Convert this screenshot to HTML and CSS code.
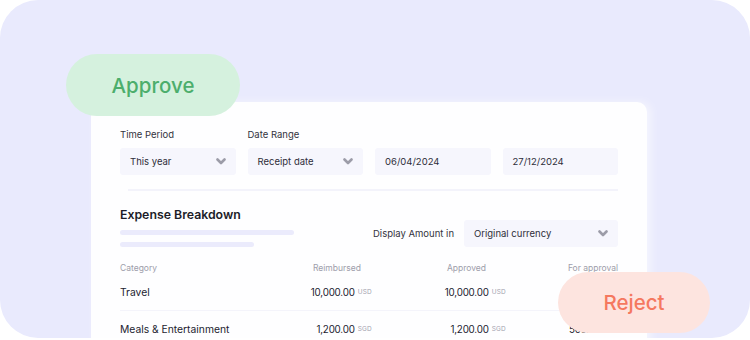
FILE: index.html
```html
<!DOCTYPE html>
<html lang="en">
<head>
<meta charset="utf-8">
<title>Expense approval</title>
<link rel="stylesheet" href="styles.css">
</head>
<body>
<div class="frame">
  <div class="card">
    <div class="filters">
      <div class="label">Time Period</div>
      <div class="label">Date Range</div>
      <div class="label"></div>
      <div class="label"></div>
      <div class="field">This year<svg class="chev" viewBox="0 0 10 7"><path d="M1.5 1.5 L5 5 L8.5 1.5"/></svg></div>
      <div class="field">Receipt date<svg class="chev" viewBox="0 0 10 7"><path d="M1.5 1.5 L5 5 L8.5 1.5"/></svg></div>
      <div class="field">06/04/2024</div>
      <div class="field">27/12/2024</div>
    </div>
    <div class="divider"></div>
    <div class="section-head">
      <div class="section-left">
        <div class="title">Expense Breakdown</div>
        <div class="bar bar-long"></div>
        <div class="bar bar-short"></div>
      </div>
      <div class="section-right">
        <span class="display-label">Display Amount in</span>
        <div class="field field-wide">Original currency<svg class="chev" viewBox="0 0 10 7"><path d="M1.5 1.5 L5 5 L8.5 1.5"/></svg></div>
      </div>
    </div>
    <div class="table">
      <div class="th">Category</div>
      <div class="th th-mid">Reimbursed</div>
      <div class="th th-mid">Approved</div>
      <div class="th th-end">For approval</div>

      <div class="td cat">Travel</div>
      <div class="td amt">10,000.00 <span class="cur">USD</span></div>
      <div class="td amt">10,000.00 <span class="cur">USD</span></div>
      <div class="td amt"></div>

      <div class="td cat">Meals &amp; Entertainment</div>
      <div class="td amt">1,200.00 <span class="cur">SGD</span></div>
      <div class="td amt">1,200.00 <span class="cur">SGD</span></div>
      <div class="td amt">500.00 <span class="cur">USD</span></div>
    </div>
  </div>
  <div class="pill pill-approve">Approve</div>
  <div class="pill pill-reject">Reject</div>
</div>
</body>
</html>
```
FILE: styles.css
```css
* { box-sizing: border-box; }
html, body { margin: 0; padding: 0; background: #ffffff; }
body { font-family: "Inter", "Noto Sans", sans-serif; color: #2a2a36; }

.frame {
  position: relative;
  width: 750px;
  height: 338px;
  background: #e9eafd;
  border-radius: 38px;
  overflow: hidden;
  padding-top: 102px;
  padding-left: 91px;
}

.card {
  width: 556px;
  height: 260px;
  background: #fefeff;
  border-radius: 8px 10px 0 0;
  padding: 27px 29px 0 29px;
  box-shadow: 4px 0 10px rgba(255, 255, 255, 0.55);
  overflow: hidden;
}

.filters {
  display: grid;
  grid-template-columns: repeat(4, 1fr);
  column-gap: 12px;
  row-gap: 7px;
}
.label {
  font-size: 9.5px;
  line-height: 12px;
  color: #333340;
}
.field {
  height: 27px;
  background: #f6f6fd;
  border-radius: 3px;
  display: flex;
  align-items: center;
  justify-content: space-between;
  padding: 0 10px 0 10px;
  font-size: 9.5px;
  color: #2e2e3a;
}
.chev {
  width: 10px;
  height: 7px;
  fill: none;
  stroke: #9c9ca8;
  stroke-width: 2.6;
  stroke-linecap: round;
  stroke-linejoin: round;
}

.divider {
  height: 2px;
  background: #f3f3fb;
  margin: 14px 0 0 8px;
}

.section-head {
  display: flex;
  justify-content: space-between;
  align-items: flex-end;
  margin-top: 16px;
}
.section-left { display: flex; flex-direction: column; }
.title {
  font-size: 12.3px;
  line-height: 16px;
  font-weight: 600;
  color: #1c1c28;
}
.bar {
  height: 5px;
  border-radius: 3px;
  background: #ebebfc;
}
.bar-long { width: 174px; margin-top: 7px; }
.bar-short { width: 134px; margin-top: 7px; }

.section-right {
  display: flex;
  align-items: center;
  gap: 10px;
}
.display-label { font-size: 9.5px; color: #333340; }
.field-wide { width: 154px; }

.table {
  display: grid;
  grid-template-columns: 118px 134px 134px 1fr;
  margin-top: 15px;
}
.th {
  font-size: 8.5px;
  line-height: 12px;
  color: #9d9daa;
}
.th-mid { padding-left: 75px; white-space: nowrap; }
.th-end { text-align: right; white-space: nowrap; }
.td {
  height: 37px;
  display: flex;
  align-items: center;
  border-bottom: 1px solid #f4f4fb;
  font-size: 10.3px;
  color: #23232f;
}
.td.cat { white-space: nowrap; }
.td.amt {
  justify-content: flex-end;
  white-space: nowrap;
  font-size: 9.8px;
  letter-spacing: -0.2px;
}
.cur {
  font-size: 6.5px;
  color: #a3a3b0;
  margin-left: 3px;
  letter-spacing: 0.2px;
}

.pill {
  position: absolute;
  display: flex;
  align-items: center;
  justify-content: center;
  font-size: 20.5px;
  font-weight: 500;
  border-radius: 32px;
}
.pill-approve {
  left: 66px;
  top: 54px;
  width: 174px;
  height: 62px;
  background: #d5f1de;
  color: #4cae6c;
}
.pill-reject {
  left: 558px;
  top: 272px;
  width: 152px;
  height: 61px;
  background: #fde4df;
  color: #f5785f;
}
```
